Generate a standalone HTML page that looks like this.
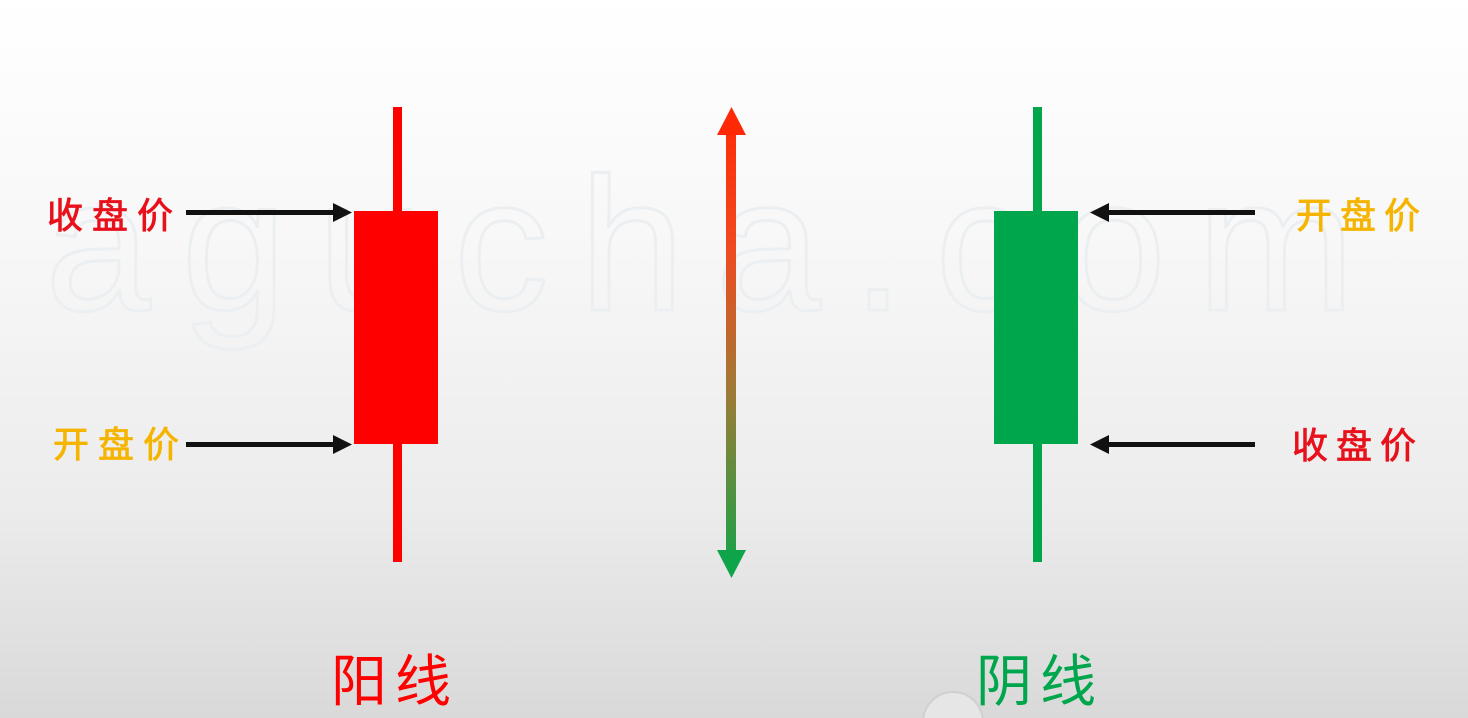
<!DOCTYPE html>
<html><head><meta charset="utf-8"><style>
html,body{margin:0;padding:0;width:1468px;height:718px;overflow:hidden;}
body{background:linear-gradient(180deg,#ffffff 0%,#f7f7f7 35%,#ececec 70%,#d9d9d9 100%);}
svg{position:absolute;left:0;top:0;}
</style></head><body>
<svg width="1468" height="718" viewBox="0 0 1468 718" xmlns="http://www.w3.org/2000/svg">
<defs>
<linearGradient id="g" x1="0" y1="107" x2="0" y2="578" gradientUnits="userSpaceOnUse">
<stop offset="0" stop-color="#ff2a05"/><stop offset="0.3" stop-color="#f04a20"/><stop offset="0.6" stop-color="#a07a35"/><stop offset="1" stop-color="#0ea54a"/>
</linearGradient>
</defs>
<text x="45" y="310" font-family="Liberation Sans, sans-serif" font-size="190" fill="none" stroke="#ebeff2" stroke-width="3" textLength="1310" lengthAdjust="spacing">agucha.com</text>
<rect x="393" y="107" width="9" height="455" fill="#ff0000"/>
<rect x="354" y="211" width="84" height="233" fill="#ff0000"/>
<rect x="1033" y="107" width="9" height="455" fill="#00a64c"/>
<rect x="994" y="211" width="84" height="233" fill="#00a64c"/>
<g fill="#111">
<rect x="186" y="210" width="150" height="5"/><polygon points="333,203 352,212.5 333,222"/>
<rect x="186" y="442" width="150" height="5"/><polygon points="333,435 352,444.5 333,454"/>
<rect x="1108" y="210" width="147" height="5"/><polygon points="1109,203 1090,212.5 1109,222"/>
<rect x="1108" y="442" width="147" height="5"/><polygon points="1109,435 1090,444.5 1109,454"/>
</g>
<rect x="726" y="130" width="10" height="425" fill="url(#g)"/>
<polygon points="731.5,107 717,135 746,135" fill="#ff2a05"/>
<polygon points="731.5,578 717,550 746,550" fill="#0ea54a"/>
<g font-family="Liberation Sans, 'Noto Sans CJK SC', sans-serif" font-size="36" stroke-width="0.8">
<text x="47" y="228" fill="#e8101a" stroke="#e8101a" letter-spacing="9">收盘价</text>
<text x="53" y="457" fill="#f5b400" stroke="#f5b400" letter-spacing="9">开盘价</text>
<text x="1296" y="228" fill="#f5b400" stroke="#f5b400" letter-spacing="8">开盘价</text>
<text x="1292" y="458" fill="#e8101a" stroke="#e8101a" letter-spacing="8">收盘价</text>
</g>
<g font-family="Liberation Sans, 'Noto Sans CJK SC', sans-serif" font-size="56">
<text x="331" y="701" fill="#ff0000" letter-spacing="8">阳线</text>
<text x="976" y="701" fill="#00a64c" letter-spacing="8">阴线</text>
</g>
<circle cx="953" cy="722" r="30" fill="#e6e6e6" stroke="#cfcfcf" stroke-width="2"/>
</svg>
</body></html>
